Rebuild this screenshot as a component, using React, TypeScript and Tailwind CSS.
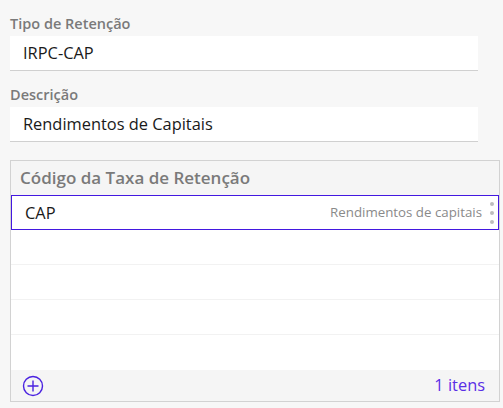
export default function App() {
  const empty = [0, 1, 2, 3];
  return (
    <div className="w-[503px] h-[408px] bg-[#f7f7f7] pt-[12px] font-['Open_Sans'] overflow-hidden">
      <div className="px-[10px] w-[488px]">
        <div className="h-[24px] text-[14.5px] font-semibold text-[#7a7a7a] leading-[24px]">Tipo de Retenção</div>
        <div className="h-[35px] bg-white border-b border-[#d0d0d0] pl-[13px] flex items-center text-[16.4px] text-[#1a1a1a]">IRPC-CAP</div>
        <div className="h-[36px] pt-[12px] text-[14.5px] font-semibold text-[#7a7a7a] leading-[24px]">Descrição</div>
        <div className="h-[35px] bg-white border-b border-[#d0d0d0] pl-[13px] flex items-center text-[16.4px] text-[#1a1a1a]">Rendimentos de Capitais</div>
      </div>
      <div className="ml-[10px] mt-[18px] w-[490px] h-[242px] border border-[#d2d2d2] flex flex-col">
        <div className="h-[35px] bg-[#f5f5f5] pl-[9px] flex items-center text-[17px] font-semibold text-[#7a7a7a]">Código da Taxa de Retenção</div>
        <div className="bg-white flex-1 flex flex-col">
          <div className="h-[35px] border border-[#4318e0] flex items-center pl-[13px] pr-[4px]">
            <span className="text-[16.4px] text-[#1a1a1a]">CAP</span>
            <span className="ml-auto text-[13.3px] text-[#8a8a8a]">Rendimentos de capitais</span>
            <div className="ml-[8px] flex flex-col gap-[5px]">
              <span className="w-[4px] h-[4px] rounded-full bg-[#bdbdbd]" />
              <span className="w-[4px] h-[4px] rounded-full bg-[#bdbdbd]" />
              <span className="w-[4px] h-[4px] rounded-full bg-[#bdbdbd]" />
            </div>
          </div>
          {empty.map((i) => (
            <div key={i} className={"h-[35px] " + (i < 3 ? "border-b border-[#f2f2f2]" : "")} />
          ))}
        </div>
        <div className="h-[31px] bg-[#f5f5f5] flex items-center pl-[11px] pr-[14px]">
          <svg width="22" height="22" viewBox="0 0 22 22" fill="none" stroke="#4a22e0" strokeWidth="1.4">
            <circle cx="11" cy="11" r="9.5" />
            <path d="M11 5.5v11M5.5 11h11" />
          </svg>
          <span className="ml-auto text-[16.4px] text-[#5a2ee6]">1 itens</span>
        </div>
      </div>
    </div>
  );
}
